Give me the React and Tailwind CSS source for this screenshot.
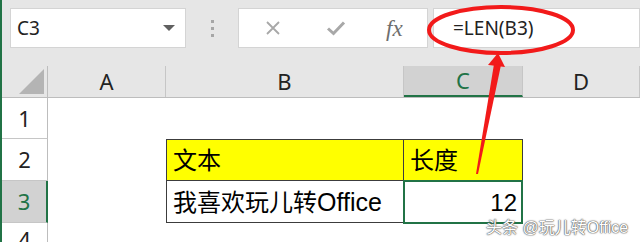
import React from "react";

const ui = { fontFamily: '"Noto Sans", "Open Sans", sans-serif' };
const cell = { fontFamily: '"Liberation Sans", "Noto Sans CJK SC", sans-serif' };

const ColHead = ({ label, w, active }) => (
  <div
    className={`${w} h-full flex items-center justify-center border-r border-[#c6c6c6] text-[22px] ${
      active ? "bg-[#d2d2d2] text-[#217346] border-b-2 border-b-[#217346]" : "text-[#222]"
    }`}
  >
    {label}
  </div>
);

const RowHead = ({ n, h, active }) => (
  <div
    className={`w-[46px] ${h} shrink-0 flex items-center justify-center border-b border-[#c6c6c6] text-[22px] ${
      active ? "bg-[#d2d2d2] text-[#217346] border-r-2 border-r-[#217346]" : "border-r border-r-[#bdbdbd] text-[#222]"
    }`}
    style={ui}
  >
    {n}
  </div>
);

export default function App() {
  return (
    <div className="w-[640px] h-[242px] overflow-hidden bg-[#e6e6e6] border-l-2 border-[#217346] relative flex flex-col">
      {/* formula bar */}
      <div className="h-[66px] shrink-0 flex items-start pt-2 pl-2" style={ui}>
        <div className="w-[176px] h-[40px] bg-white border border-[#d4d4d4] flex items-center justify-between pl-[6px] pr-[10px]">
          <span className="text-[19px] text-[#222]">C3</span>
          <span className="w-0 h-0 border-l-[6px] border-r-[6px] border-t-[6px] border-l-transparent border-r-transparent border-t-[#606060]" />
        </div>
        <div className="w-[52px] h-[40px] flex flex-col items-center justify-center gap-[4px]">
          <span className="w-[3px] h-[3px] bg-[#a6a6a6]" />
          <span className="w-[3px] h-[3px] bg-[#a6a6a6]" />
          <span className="w-[3px] h-[3px] bg-[#a6a6a6]" />
        </div>
        <div className="w-[190px] h-[40px] bg-white border border-[#d4d4d4] flex items-center">
          <svg width="16" height="16" viewBox="0 0 16 16" className="ml-[26px]">
            <path d="M2 2 L14 14 M14 2 L2 14" stroke="#a8a8a8" strokeWidth="1.8" fill="none" />
          </svg>
          <svg width="20" height="16" viewBox="0 0 20 16" className="ml-[45px]">
            <path d="M2 8.5 L7.5 13.5 L18 2.5" stroke="#a8a8a8" strokeWidth="3" fill="none" />
          </svg>
          <span
            className="ml-[40px] text-[23px] italic text-[#6e6e6e] leading-none"
            style={{ fontFamily: '"Liberation Serif", serif' }}
          >
            fx
          </span>
        </div>
        <div className="flex-1 h-[40px] ml-[5px] bg-white border border-[#d4d4d4] flex items-center pl-[19px]">
          <span className="text-[19px] text-[#222]">=LEN(B3)</span>
        </div>
      </div>

      {/* column headers */}
      <div className="h-[32px] shrink-0 flex border-b border-[#bdbdbd]" style={ui}>
        <div className="w-[46px] h-full border-r border-[#bdbdbd] flex items-end justify-end pr-[3px] pb-[3px]">
          <span className="w-0 h-0 border-l-[25px] border-b-[25px] border-l-transparent border-b-[#b4b4b4]" />
        </div>
        <ColHead label="A" w="w-[118px]" />
        <ColHead label="B" w="w-[238px]" />
        <ColHead label="C" w="w-[119px]" active />
        <ColHead label="D" w="flex-1" />
      </div>

      {/* rows */}
      <div className="flex-1 flex flex-col bg-white">
        <div className="flex h-[41px]">
          <RowHead n="1" h="h-[41px]" />
        </div>
        <div className="flex h-[42px]">
          <RowHead n="2" h="h-[42px]" />
          <div className="w-[118px]" />
          <div
            className="w-[238px] h-full bg-[#ffff00] border border-[#3c3c3c] flex items-center pl-[6px] pt-[2px] text-[24px] text-black"
            style={cell}
          >
            文本
          </div>
          <div
            className="w-[119px] h-full bg-[#ffff00] border border-l-0 border-[#3c3c3c] flex items-center pl-[6px] pt-[2px] text-[24px] text-black"
            style={cell}
          >
            长度
          </div>
        </div>
        <div className="flex h-[42px]">
          <RowHead n="3" h="h-[42px]" active />
          <div className="w-[118px]" />
          <div
            className="w-[238px] h-full border border-t-0 border-[#3c3c3c] flex items-center pl-[6px] pt-[2px] text-[24px] text-black whitespace-nowrap"
            style={cell}
          >
            我喜欢玩儿转<span className="text-[25px]">Office</span>
          </div>
          <div
            className="w-[120px] h-[44px] -ml-[1px] -mt-[1px] border-2 border-[#217346] flex items-center justify-end pr-[4px] pt-[2px] text-[24px] text-black"
            style={cell}
          >
            12
          </div>
        </div>
        <div className="flex flex-1">
          <RowHead n="4" h="h-full" />
        </div>
      </div>

      {/* watermark */}
      <div
        className="absolute left-[484px] top-[216px] text-[16px] text-white whitespace-nowrap"
        style={{ ...cell, textShadow: "0 0 1px #555, 0 0 1px #555, 0 0 2px #777" }}
      >
        头条 @玩儿转Office
      </div>

      {/* red annotation */}
      <svg className="absolute left-0 top-0 pointer-events-none" width="640" height="242">
        <ellipse cx="499" cy="30" rx="72" ry="23" fill="none" stroke="#f21a1a" strokeWidth="4" />
        <polygon points="496,53 486,65 503,67" fill="#f21a1a" />
        <polygon points="492,64 499,65 476,174 474,174" fill="#f21a1a" />
      </svg>
    </div>
  );
}
